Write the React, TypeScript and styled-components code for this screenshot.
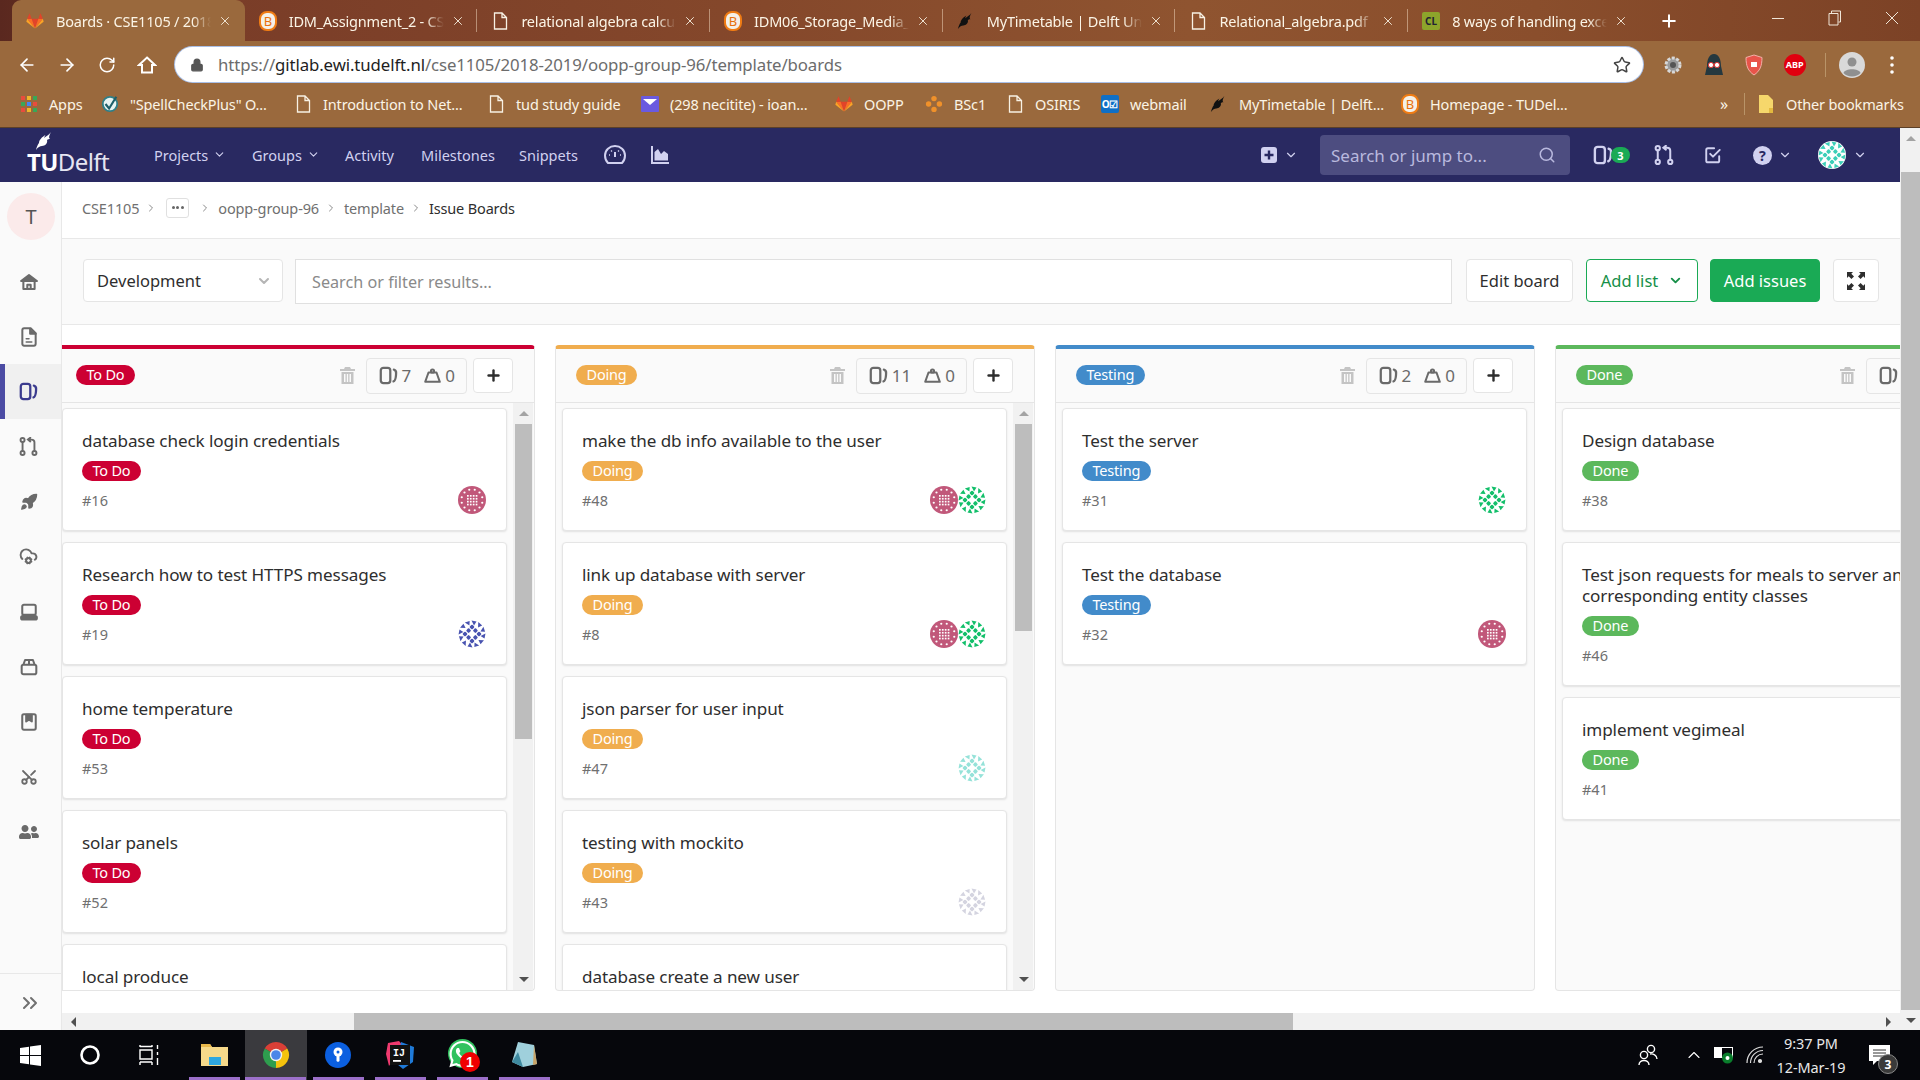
import React from 'react';
import styled, { createGlobalStyle } from 'styled-components';
import { Rocket, CloudCog, Scissors, Star, Lock, ArrowLeft, ArrowRight, RotateCw, ChevronDown, ChevronRight, Search, Plus, X, ChevronsRight, ChevronUp } from 'lucide-react';
import { FaUserFriends, FaWhatsapp } from 'react-icons/fa';

const UI = `"Noto Sans", "Open Sans", sans-serif`;

const Global = createGlobalStyle`
  html, body { margin: 0; padding: 0; overflow: hidden; background: #fff; }
  * { box-sizing: border-box; }
  #root { width: 1920px; height: 1080px; font-family: ${UI}; }
`;

const Screen = styled.div`width: 1920px; height: 1080px; display: flex; flex-direction: column; overflow: hidden;`;

/* ---------- browser chrome ---------- */
const TabStrip = styled.div`
  height: 41px; flex: none; display: flex; align-items: stretch; padding-left: 12px;
  background: linear-gradient(90deg, #5a281f 0, #7a3d28 12%, #85482b 40%, #8f5430 62%, #8a4e2c 80%, #7c4226 100%);
`;
const Tab = styled.div<{ $active?: boolean; $sep?: boolean }>`
  width: 232.7px; flex: none; display: flex; align-items: center; position: relative; padding-left: 14px;
  color: #fbf4e6; font-size: 14.5px;
  background: ${p => (p.$active ? '#9a693d' : 'transparent')};
  border-radius: 9px 9px 0 0;
  &::after {
    content: ''; position: absolute; right: 0; top: 9px; bottom: 9px; width: 1px;
    background: ${p => (p.$sep ? 'rgba(255,235,210,.45)' : 'transparent')};
  }
`;
const TabIcon = styled.span`width: 18px; height: 18px; flex: none; display: flex; align-items: center; justify-content: center;`;
const TabTitle = styled.span`
  margin: 0 6px 0 12px; width: 155px; flex: none; white-space: nowrap; overflow: hidden; letter-spacing: -0.2px;
  mask-image: linear-gradient(90deg, #000 88%, transparent);
`;
const TabClose = styled.span`width: 16px; display: flex; justify-content: center; color: #f4ecdc;`;
const NewTab = styled.div`margin-left: 16px; width: 24px; display: flex; align-items: center; justify-content: center; color: #fff;`;
const WindowControls = styled.div`margin-left: auto; display: flex;`;
const WindowButton = styled.div`width: 57px; display: flex; align-items: center; justify-content: center; color: #f0e6d8; padding-bottom: 6px;`;

const Toolbar = styled.div`height: 46px; flex: none; display: flex; align-items: flex-start; padding: 6px 0 0 7px; background: #9a693d;`;
const ToolButton = styled.div`width: 40px; height: 35px; flex: none; display: flex; align-items: center; justify-content: center; color: #fff;`;
const Address = styled.div`
  margin-left: 8px; width: 1468px; height: 35px; flex: none; display: flex; align-items: center; padding: 0 12px 0 15px;
  background: #fff; border-radius: 18px; box-shadow: 0 0 0 1px #a9bfe6; font-size: 16.8px; color: #6c6c6c; letter-spacing: -0.1px;
`;
const Url = styled.span`margin-left: 14px; flex: 1; white-space: nowrap;`;
const Host = styled.span`color: #1e1e1e;`;
const Extensions = styled.div`margin-left: 10px; display: flex; align-items: center; height: 35px;`;
const ExtSlot = styled.div`width: 40.5px; display: flex; justify-content: center;`;
const ExtDivider = styled.div`margin-left: 10px; width: 1px; height: 24px; background: #b99468;`;
const ProfileSlot = styled.div`width: 52px; display: flex; justify-content: center;`;
const DotsSlot = styled.div`width: 28px; display: flex; justify-content: center; color: #fff;`;

const BookmarkBar = styled.div`
  height: 41px; flex: none; display: flex; align-items: center; padding: 0 0 7px 20px; background: #9a693d;
  border-bottom: 1px solid #5c4028; color: #fbf4e6; font-size: 14.5px; letter-spacing: -0.15px;
`;
const Bookmark = styled.div<{ $w: number }>`width: ${p => p.$w}px; flex: none; display: flex; align-items: center; gap: 11px; white-space: nowrap;`;
const BookmarkIcon = styled.span`width: 18px; height: 18px; flex: none; display: flex; align-items: center; justify-content: center;`;
const BookmarkEnd = styled.div`margin-left: auto; display: flex; align-items: center; padding-right: 30px;`;
const More = styled.span`font-size: 16px; width: 20px; text-align: center;`;
const BarDivider = styled.span`margin: 0 12px 0 10px; width: 1px; height: 22px; background: #b99468;`;

/* ---------- page ---------- */
const Viewport = styled.div`flex: 1; min-height: 0; display: flex;`;
const Page = styled.div`width: 1900px; flex: none; display: flex; flex-direction: column; min-width: 0;`;

const Nav = styled.div`height: 54px; flex: none; display: flex; align-items: center; background: #292961; padding-left: 27px; padding-right: 33px; color: #d1d1f0; font-size: 14.5px;`;
const Logo = styled.div`width: 127px; flex: none; display: flex; flex-direction: column; color: #fff; line-height: 1; position: relative; height: 48px; padding-bottom: 5px; justify-content: flex-end;`;
const LogoFlame = styled.span`position: absolute; left: 8px; top: 0;`;
const LogoText = styled.span`font-size: 24px; letter-spacing: -0.6px; color: #e6e6f2;`;
const LogoStrong = styled.b`font-weight: 700; color: #fff;`;
const NavItem = styled.div<{ $w: number }>`width: ${p => p.$w}px; flex: none; display: flex; align-items: center; gap: 5px; white-space: nowrap; padding-bottom: 1px;`;
const NavRight = styled.div`margin-left: auto; display: flex; align-items: center;`;
const NavIconSlot = styled.span<{ $ml?: number }>`margin-left: ${p => p.$ml ?? 0}px; display: flex; align-items: center; color: #d1d1f0;`;
const NavSearch = styled.div`
  margin-left: 22px; width: 250px; height: 40px; display: flex; align-items: center; justify-content: space-between;
  padding: 0 14px 0 11px; background: #4d4d80; border-radius: 4px; color: #b9b9de; font-size: 17px;
`;
const NavBadge = styled.span`
  width: 19px; height: 16px; border-radius: 8px; background: #1aaa55; color: #fff; font-size: 11px; font-weight: 700;
  display: flex; align-items: center; justify-content: center; margin-left: -2px;
`;

const Body = styled.div`flex: 1; min-height: 0; display: flex;`;
const Sidebar = styled.div`width: 62px; flex: none; display: flex; flex-direction: column; background: #fafafa; border-right: 1px solid #e8e8e8;`;
const ContextAvatar = styled.div`
  margin: 11px 0 14px 7px; width: 48px; height: 47px; border-radius: 50%; background: #fbeaea; color: #555;
  display: flex; align-items: center; justify-content: center; font-size: 20px;
`;
const SideItem = styled.div<{ $active?: boolean }>`
  height: 55px; flex: none; display: flex; align-items: center; justify-content: center; padding-right: 4px;
  color: ${p => (p.$active ? '#3b3b8e' : '#6a6a6a')};
  background: ${p => (p.$active ? '#f0f0f0' : 'transparent')};
  box-shadow: ${p => (p.$active ? 'inset 5px 0 0 #4b4ba3' : 'none')};
`;
const SideCollapse = styled.div`margin-top: auto; height: 57px; border-top: 1px solid #e8e8e8; display: flex; align-items: center; justify-content: center; color: #707070; padding: 2px 2px 0 0;`;

const Main = styled.div`flex: 1; min-width: 0; display: flex; flex-direction: column;`;
const Crumbs = styled.div`height: 57px; flex: none; display: flex; align-items: center; padding-left: 20px; border-bottom: 1px solid #e8e8e8; background: #fff; color: #707070; font-size: 14.5px; padding-bottom: 5px; letter-spacing: -0.15px;`;
const CrumbArrow = styled.span`display: flex; margin: 0 7px 0 6px; color: #8a8a8a;`;
const CrumbDots = styled.span`width: 23px; height: 20px; border: 1px solid #e0e0e0; border-radius: 3px; display: flex; align-items: center; justify-content: center; gap: 1.5px; margin: 0 4px 0 2px;`;
const CrumbDot = styled.i`width: 3px; height: 3px; border-radius: 50%; background: #666;`;
const CrumbCurrent = styled.span`color: #2e2e2e;`;

const FilterBar = styled.div`
  height: 86px; flex: none; display: flex; align-items: flex-start; padding: 20px 21px 0; background: #fafafa; border-bottom: 1px solid #e8e8e8;
`;
const BoardSelect = styled.div`
  width: 200px; height: 43px; flex: none; display: flex; align-items: center; justify-content: space-between; padding: 0 10px 0 13px;
  background: #fff; border: 1px solid #e5e5e5; border-radius: 4px; color: #2e2e2e; font-size: 16.5px;
`;
const FilterInput = styled.div`
  margin-left: 12px; width: 1157px; height: 45px; flex: none; display: flex; align-items: center; padding-left: 16px;
  background: #fff; border: 1px solid #e0e0e0; color: #8a8a8a; font-size: 16.2px;
`;
const ActionButton = styled.div<{ $w: number; $ml: number; $kind?: 'outline' | 'solid' }>`
  width: ${p => p.$w}px; margin-left: ${p => p.$ml}px; height: 43px; flex: none; display: flex; align-items: center; justify-content: center; gap: 10px;
  border-radius: 4px; font-size: 16.5px;
  border: 1px solid ${p => (p.$kind === 'outline' ? '#1aaa55' : p.$kind === 'solid' ? '#1aaa55' : '#e5e5e5')};
  background: ${p => (p.$kind === 'solid' ? '#1aaa55' : '#fff')};
  color: ${p => (p.$kind === 'solid' ? '#fff' : p.$kind === 'outline' ? '#168f48' : '#2e2e2e')};
`;

const BoardArea = styled.div`flex: 1; min-height: 0; overflow: hidden; padding-top: 20px; background: #fff;`;
const Lists = styled.div`height: 646px; display: flex; gap: 20px; margin-left: -7px; width: 2000px;`;
const Column = styled.div<{ $color: string }>`
  width: 480px; flex: none; display: flex; flex-direction: column; background: #fafafa; overflow: hidden;
  border: 1px solid #e5e5e5; border-top: 4px solid ${p => p.$color}; border-radius: 4px;
`;
const ColumnHeader = styled.div`height: 54px; flex: none; display: flex; align-items: center; padding: 0 21px 0 20px; border-bottom: 1px solid #e5e5e5;`;
const HeaderPill = styled.span<{ $color: string }>`
  height: 20px; padding: 0 10.5px; border-radius: 10px; background: ${p => p.$color}; color: #fff; font-size: 14.5px; line-height: 19px; letter-spacing: -0.2px;
`;
const ColumnPill = styled(HeaderPill)`margin-top: -2px;`;
const Trash = styled.span`margin-left: auto; margin-right: 11px; display: flex; color: #c4c4c4;`;
const CountBox = styled.div`
  height: 36px; padding: 0 11px 0 12px; display: flex; align-items: center; gap: 4px; border: 1px solid #e5e5e5; border-radius: 4px; color: #6a6a6a; font-size: 17px;
`;
const CountGap = styled.span`width: 5px;`;
const AddCard = styled.div`margin-left: 6px; width: 40px; height: 35px; flex: none; display: flex; align-items: center; justify-content: center; background: #fff; border: 1px solid #e5e5e5; border-radius: 4px; color: #2e2e2e;`;
const ColumnBody = styled.div`flex: 1; min-height: 0; display: flex;`;
const Cards = styled.div`flex: 1; min-width: 0; display: flex; flex-direction: column; gap: 11px; padding: 5px 0 0 6px; overflow: hidden;`;
const Card = styled.div`
  width: 445px; flex: none; padding: 21px 20px 16px 19px; background: #fff; border: 1px solid #e5e5e5; border-radius: 4px;
  box-shadow: 0 1px 2px rgba(0,0,0,.1);
`;
const WideCard = styled(Card)`width: 465px;`;
const CardTitle = styled.div`font-size: 17.1px; line-height: 21px; color: #2e2e2e; letter-spacing: -0.1px;`;
const CardPill = styled(HeaderPill)`display: inline-block; margin-top: 10px; vertical-align: top;`;
const CardFoot = styled.div`height: 28px; margin-top: 5px; display: flex; align-items: center; justify-content: space-between;`;
const CardNumber = styled.span`font-size: 14.5px; color: #707070;`;
const Avatars = styled.span`display: flex; height: 28px;`;

const ListScroll = styled.div`width: 20px; flex: none; margin-right: 1px; padding-right: 1px; display: flex; flex-direction: column; align-items: flex-end; background: #f1f1f1;`;
const ArrowBox = styled.div`height: 21px; width: 17px; flex: none; display: flex; align-items: center; justify-content: center;`;
const ListThumb = styled.div<{ $h: number }>`width: 17px; height: ${p => p.$h}px; flex: none; background: #bdbdbd;`;
const ArrowEnd = styled(ArrowBox)`margin-top: auto;`;
const Triangle = styled.i<{ $dir: 'up' | 'down' | 'left' | 'right'; $color?: string }>`
  width: 0; height: 0; display: block;
  ${p => {
    const c = p.$color ?? '#505050';
    if (p.$dir === 'up') return `border-left:5px solid transparent;border-right:5px solid transparent;border-bottom:5px solid ${c === '#505050' ? '#a3a3a3' : c};`;
    if (p.$dir === 'down') return `border-left:5px solid transparent;border-right:5px solid transparent;border-top:5px solid ${c};`;
    if (p.$dir === 'left') return `border-top:5px solid transparent;border-bottom:5px solid transparent;border-right:5px solid ${c};`;
    return `border-top:5px solid transparent;border-bottom:5px solid transparent;border-left:5px solid ${c};`;
  }}
`;

const HScroll = styled.div`height: 17px; flex: none; display: flex; align-items: center; background: #f1f1f1; margin-top: 0;`;
const HArrow = styled.div<{ $w: number }>`width: ${p => p.$w}px; height: 17px; flex: none; display: flex; align-items: center; justify-content: center;`;
const HThumb = styled.div`margin-left: 270px; width: 939px; height: 17px; background: #bdbdbd;`;
const HEnd = styled(HArrow)`margin-left: auto;`;

const PageScroll = styled.div`width: 20px; flex: none; display: flex; flex-direction: column; align-items: flex-end; background: #f1f1f1;`;
const PageArrow = styled.div`width: 19px; height: 44px; flex: none; display: flex; align-items: flex-start; padding-top: 8px; justify-content: center;`;
const PageThumb = styled.div`width: 19px; height: 838px; flex: none; background: #bdbdbd;`;
const PageArrowEnd = styled.div`width: 19px; flex: 1; display: flex; align-items: center; justify-content: center;`;

/* ---------- taskbar ---------- */
const Taskbar = styled.div`height: 50px; flex: none; display: flex; align-items: center; background: #06070c; color: #fff;`;
const StartSlot = styled.div<{ $w: number }>`width: ${p => p.$w}px; height: 50px; flex: none; display: flex; align-items: center; justify-content: center;`;
const AppsGap = styled.span`width: 3px; flex: none;`;
const AppSlot = styled.div<{ $active?: boolean }>`
  width: 62px; height: 50px; flex: none; display: flex; align-items: center; justify-content: center; position: relative;
  background: ${p => (p.$active ? '#3a3a3e' : 'transparent')};
  &::after { content: ''; position: absolute; bottom: 0; height: 3px; left: ${p => (p.$active ? 0 : 6)}px; right: ${p => (p.$active ? 1 : 5)}px; background: #9b6fc9; }
`;
const WhatsappMark = styled.span`width: 29px; height: 29px; border-radius: 50%; background: #31c25f; color: #fff; display: flex; align-items: center; justify-content: center; margin-top: -3px;`;
const AppBadge = styled.span`
  position: absolute; left: 29px; top: 22px; width: 20px; height: 20px; border-radius: 50%; background: #f00000; color: #fff; font: 700 14px/20px "Liberation Sans", sans-serif; text-align: center;
`;
const Tray = styled.div`margin-left: auto; display: flex; align-items: center; height: 50px;`;
const TraySlot = styled.div<{ $w: number; $ml?: number }>`width: ${p => p.$w}px; margin-left: ${p => p.$ml ?? 0}px; display: flex; justify-content: center; align-items: center;`;
const Clock = styled.div`width: 86px; text-align: center; font-size: 14.5px; line-height: 24px; color: #e8e8e8; letter-spacing: -0.1px;`;
const Notify = styled.div`width: 50px; margin-right: 16px; height: 50px; display: flex; align-items: center; justify-content: center; position: relative;`;
const NotifyBadge = styled.span`
  position: absolute; left: 24px; top: 24px; width: 20px; height: 20px; border-radius: 50%; background: #3a3a3a; border: 1px solid #888; color: #fff;
  font-size: 12px; font-weight: 700; display: flex; align-items: center; justify-content: center;
`;
const LetterIcon = styled.span<{ $bg: string; $size?: number; $round?: boolean; $color?: string; $box?: number }>`
  width: ${p => p.$box ?? 18}px; height: ${p => p.$box ?? 18}px; display: flex; align-items: center; justify-content: center; font-size: ${p => p.$size ?? 11}px; font-weight: 700;
  background: ${p => p.$bg}; color: ${p => p.$color ?? '#fff'}; border-radius: ${p => (p.$round ? '50%' : '2px')}; line-height: 1;
`;
const ScissorsMark = styled(Scissors)`transform: rotate(-90deg);`;

/* ---------- drawings ---------- */
const FoxIcon = ({ s = 18 }: { s?: number }) => (
  <svg width={s} height={s} viewBox="0 0 24 24">
    <path d="M12 22 L16.5 9 H7.5 Z" fill="#e24329" />
    <path d="M12 22 L7.5 9 H1.5 Z" fill="#fc6d26" />
    <path d="M12 22 L16.5 9 H22.5 Z" fill="#fc6d26" />
    <path d="M1.5 9 L0.5 13 L12 22 Z" fill="#fca326" />
    <path d="M22.5 9 L23.5 13 L12 22 Z" fill="#fca326" />
    <path d="M1.5 9 H7.5 L4.8 1.5 Z" fill="#e24329" />
    <path d="M22.5 9 H16.5 L19.2 1.5 Z" fill="#e24329" />
  </svg>
);
const BIcon = () => (
  <svg width="20" height="22" viewBox="0 0 18 20">
    <rect x="1" y="1" width="16" height="18" rx="7" fill="#f4f0e8" stroke="#f07c14" strokeWidth="2" />
    <text x="9" y="14.5" textAnchor="middle" fontSize="13" fontFamily="Noto Sans" fill="#e8700e">B</text>
  </svg>
);
const PageIcon = ({ c = '#f8f1e4' }: { c?: string }) => (
  <svg width="15" height="18" viewBox="0 0 15 18" fill="none" stroke={c} strokeWidth="1.3">
    <path d="M1.5 1 H9 L13.5 5.5 V17 H1.5 Z M9 1 V5.5 H13.5" />
  </svg>
);
const FlameIcon = ({ c = '#111', s = 24 }: { c?: string; s?: number }) => (
  <svg width={s} height={s} viewBox="0 0 20 20"><path d="M16 1 C14 4 11 5 9 7 C9.5 5.5 10 4.5 10.5 4 C7 6 4 9 4 12 C3 13 2 15 1 19 C3 16 5 15 7 15 C10 15 13 12 12 9 C13 8 14 8 15 8 C13 6.5 15 3 16 1 Z" fill={c} /></svg>
);
const BoardGlyph = ({ s = 20 }: { s?: number }) => (
  <svg width={s} height={s} viewBox="0 0 16 16" fill="none" stroke="currentColor" strokeWidth="1.9" strokeLinecap="round">
    <rect x="1.5" y="1.5" width="8" height="13" rx="2.2" />
    <path d="M12.5 3 C14.6 3.4 14.6 5 14.3 8 C14 11 13.6 12.6 12.2 13" />
  </svg>
);
const MergeGlyph = ({ s = 20 }: { s?: number }) => (
  <svg width={s} height={s} viewBox="0 0 16 16" fill="none" stroke="currentColor" strokeWidth="1.6" strokeLinecap="round">
    <circle cx="3" cy="13.5" r="1.7" /><circle cx="13" cy="13.5" r="1.7" /><circle cx="3" cy="2.5" r="1.7" />
    <path d="M3 4.3 V11.7 M13 11.7 V4.5 C13 3 12 2.2 10.5 2.2 H7.5 M9.5 0.6 L7.5 2.2 L9.5 3.8" />
  </svg>
);
const TodoGlyph = () => (
  <svg width="18" height="18" viewBox="0 0 16 16" fill="none" stroke="currentColor" strokeWidth="1.7" strokeLinecap="round" strokeLinejoin="round">
    <path d="M13.5 9 V13 C13.5 14 13 14.5 12 14.5 H3.5 C2.5 14.5 2 14 2 13 V3.5 C2 2.5 2.5 2 3.5 2 H9" /><path d="M5.5 7 L8 9.5 L14 3.5" />
  </svg>
);
const HelpGlyph = () => (
  <svg width="19" height="19" viewBox="0 0 16 16"><circle cx="8" cy="8" r="8" fill="currentColor" /><text x="8" y="12.5" textAnchor="middle" fontSize="12" fontWeight="700" fontFamily="Noto Sans" fill="#292961">?</text></svg>
);
const HomeGlyph = () => (
  <svg width="18" height="18" viewBox="0 0 16 16" fill="none" stroke="currentColor" strokeWidth="1.8" strokeLinejoin="round">
    <path d="M1 7.2 L8 1.8 L15 7.2 H1 Z" fill="currentColor" /><path d="M3 7 V14.2 H13 V7 M6.5 14 V10.5 H9.5 V14" />
  </svg>
);
const DocGlyph = () => (
  <svg width="18" height="20" viewBox="0 0 16 18" fill="none" stroke="currentColor" strokeWidth="1.8" strokeLinejoin="round" strokeLinecap="round">
    <path d="M2 3 C2 2 2.6 1.2 3.6 1.2 H9.5 L14 5.5 V15 C14 16 13.4 16.8 12.4 16.8 H3.6 C2.6 16.8 2 16 2 15 Z" /><path d="M9 1.5 V6 H14" fill="currentColor" /><path d="M5.5 10.5 H8 M5.5 13.5 H10.5" strokeWidth="1.4" />
  </svg>
);
const LaptopGlyph = () => (
  <svg width="18" height="18" viewBox="0 0 16 16" fill="none" stroke="currentColor" strokeWidth="1.8" strokeLinejoin="round">
    <rect x="2" y="1.5" width="12" height="9" rx="1.5" /><rect x="1" y="11.5" width="14" height="3.2" rx="1.4" fill="currentColor" />
  </svg>
);
const PackageGlyph = () => (
  <svg width="18" height="18" viewBox="0 0 16 16" fill="none" stroke="currentColor" strokeWidth="1.8" strokeLinejoin="round">
    <rect x="1.5" y="6" width="13" height="8.5" rx="1.6" /><path d="M3 6 L4.5 1.8 H11.5 L13 6 M8 2 V6" />
  </svg>
);
const BookGlyph = () => (
  <svg width="18" height="18" viewBox="0 0 16 16" fill="none" stroke="currentColor" strokeWidth="1.8" strokeLinejoin="round">
    <rect x="2" y="1.2" width="12" height="13.6" rx="1.4" /><path d="M5.5 1.5 H10.5 V7.5 L8 6 L5.5 7.5 Z" fill="currentColor" />
  </svg>
);

const Identicon = ({ color, kind, s = 28, faded }: { color: string; kind: 'dots' | 'flake'; s?: number; faded?: boolean }) => {
  const cells: React.ReactNode[] = [];
  if (kind === 'dots') {
    for (let x = 0; x < 4; x++) for (let y = 0; y < 4; y++)
      cells.push(<rect key={`g${x}${y}`} x={9 + x * 2.9} y={9 + y * 2.9} width="1.7" height="1.7" fill="#fff" />);
    for (let i = 0; i < 12; i++) {
      const a = (i / 12) * Math.PI * 2 + Math.PI / 12;
      cells.push(<circle key={`r${i}`} cx={14 + 10.6 * Math.cos(a)} cy={14 + 10.6 * Math.sin(a)} r="1.1" fill="#fff" />);
    }
    return <svg width={s} height={s} viewBox="0 0 28 28"><circle cx="14" cy="14" r="14" fill={color} />{cells}</svg>;
  }
  [[-3.4, -3.4], [3.4, -3.4], [-3.4, 3.4], [3.4, 3.4], [0, -7], [0, 7], [-7, 0], [7, 0]].forEach(([dx, dy], i) =>
    cells.push(<rect key={`c${i}`} x={14 + dx - 1.9} y={14 + dy - 1.9} width="3.8" height="3.8" rx="1" transform={`rotate(45 ${14 + dx} ${14 + dy})`} fill={color} />),
  );
  for (let i = 0; i < 12; i++) {
    const a = (i / 12) * 360;
    cells.push(<path key={`p${i}`} d="M13.5 0.5 L18.5 1.5 L16 5.4 Z" transform={`rotate(${a} 14 14)`} fill={color} />);
  }
  return <svg width={s} height={s} viewBox="0 0 28 28" opacity={faded ? 0.6 : 1}><circle cx="14" cy="14" r="14" fill="#fff" />{cells}</svg>;
};

const pink = { color: '#c1587a', kind: 'dots' as const };
const green = { color: '#12bf6a', kind: 'flake' as const };
const blue = { color: '#4853b0', kind: 'flake' as const };
const teal = { color: '#4fd0c0', kind: 'flake' as const, faded: true };
const grey = { color: '#b8b8cc', kind: 'flake' as const, faded: true };

/* ---------- data ---------- */
const tabs = [
  { t: 'Boards · CSE1105 / 2018-2019 / oopp', i: <FoxIcon />, active: true },
  { t: 'IDM_Assignment_2 - CSE1505', i: <BIcon />, sep: true },
  { t: 'relational algebra calculator', i: <PageIcon />, sep: true },
  { t: 'IDM06_Storage_Media_and_File', i: <BIcon />, sep: true },
  { t: 'MyTimetable | Delft University', i: <FlameIcon />, sep: true },
  { t: 'Relational_algebra.pdf', i: <PageIcon />, sep: true },
  { t: '8 ways of handling exceptions', i: <LetterIcon $bg="#8da52b" $color="#223" $size={10}>CL</LetterIcon> },
];

const bookmarks: { t: string; w: number; i: React.ReactNode }[] = [
  { t: 'Apps', w: 81, i: <svg width="16" height="16" viewBox="0 0 16 16">{[0, 1, 2].flatMap(x => [0, 1, 2].map(y => <rect key={`${x}${y}`} x={x * 6} y={y * 6} width="4" height="4" fill={['#e84c3d', '#f0b429', '#3aa757', '#4285f4'][(x + y * 2) % 4]} />))}</svg> },
  { t: '"SpellCheckPlus" O...', w: 193, i: <svg width="20" height="20" viewBox="0 0 20 20"><circle cx="10" cy="10" r="8" fill="#e8f4f2" stroke="#2f7f88" strokeWidth="2" /><path d="M5 10 L9 15 L17 2" fill="none" stroke="#1d5f6a" strokeWidth="2.4" /></svg> },
  { t: 'Introduction to Net...', w: 193, i: <PageIcon /> },
  { t: 'tud study guide', w: 154, i: <PageIcon /> },
  { t: '(298 necitite) - ioan...', w: 194, i: <svg width="18" height="16" viewBox="0 0 18 16"><rect width="18" height="16" rx="1" fill="#6a5ae0" /><path d="M2 3 H16 L9 9 Z" fill="#fff" /></svg> },
  { t: 'OOPP', w: 90, i: <FoxIcon /> },
  { t: 'BSc1', w: 81, i: <svg width="20" height="20" viewBox="0 0 20 20" fill="#f0912a"><circle cx="10" cy="4" r="3" /><circle cx="4" cy="10" r="3" /><circle cx="16" cy="10" r="3" /><circle cx="10" cy="16" r="3" /></svg> },
  { t: 'OSIRIS', w: 95, i: <PageIcon /> },
  { t: 'webmail', w: 109, i: <LetterIcon $bg="#0f6fc6" $size={10}>O☑</LetterIcon> },
  { t: 'MyTimetable | Delft...', w: 191, i: <FlameIcon /> },
  { t: 'Homepage - TUDel...', w: 200, i: <BIcon /> },
];

type CardData = { title: React.ReactNode; num: string; who?: any[] };
const lists: { name: string; color: string; count: string; thumb?: number; cards: CardData[] }[] = [
  { name: 'To Do', color: '#cc0033', count: '7', thumb: 315, cards: [
    { title: 'database check login credentials', num: '#16', who: [pink] },
    { title: 'Research how to test HTTPS messages', num: '#19', who: [blue] },
    { title: 'home temperature', num: '#53' },
    { title: 'solar panels', num: '#52' },
    { title: 'local produce', num: '#50' },
  ] },
  { name: 'Doing', color: '#f0ad4e', count: '11', thumb: 207, cards: [
    { title: 'make the db info available to the user', num: '#48', who: [pink, green] },
    { title: 'link up database with server', num: '#8', who: [pink, green] },
    { title: 'json parser for user input', num: '#47', who: [teal] },
    { title: 'testing with mockito', num: '#43', who: [grey] },
    { title: 'database create a new user', num: '#40' },
  ] },
  { name: 'Testing', color: '#428bca', count: '2', cards: [
    { title: 'Test the server', num: '#31', who: [green] },
    { title: 'Test the database', num: '#32', who: [pink] },
  ] },
  { name: 'Done', color: '#5cb85c', count: '9', cards: [
    { title: 'Design database', num: '#38' },
    { title: 'Test json requests for meals to server and corresponding entity classes', num: '#46' },
    { title: 'implement vegimeal', num: '#41' },
  ] },
];

const TrashGlyph = () => (
  <svg width="15" height="17" viewBox="0 0 15 17" fill="currentColor"><path d="M5 0 H10 L11 2 H15 V4 H0 V2 H4 Z" /><path d="M1.5 5 H13.5 V17 H1.5 Z M4 7 V15 H5.5 V7 Z M6.8 7 V15 H8.2 V7 Z M9.5 7 V15 H11 V7 Z" fillRule="evenodd" /></svg>
);
const WeightGlyph = () => (
  <svg width="17" height="15" viewBox="0 0 17 15" fill="none" stroke="currentColor" strokeWidth="2" strokeLinejoin="round"><path d="M1.2 13.8 L4.5 4.5 H12.5 L15.8 13.8 Z" /><circle cx="8.5" cy="3" r="1.6" /></svg>
);

const ListCard = ({ c, wide, color, name }: { c: CardData; wide: boolean; color: string; name: string }) => {
  const Wrap = wide ? WideCard : Card;
  return (
    <Wrap>
      <CardTitle>{c.title}</CardTitle>
      <CardPill $color={color}>{name}</CardPill>
      <CardFoot>
        <CardNumber>{c.num}</CardNumber>
        <Avatars>{(c.who ?? []).map((w, i) => <Identicon key={i} {...w} />)}</Avatars>
      </CardFoot>
    </Wrap>
  );
};

export default function App() {
  return (
    <Screen>
      <Global />
      <TabStrip>
        {tabs.map(t => (
          <Tab key={t.t} $active={t.active} $sep={t.sep}>
            <TabIcon>{t.i}</TabIcon>
            <TabTitle>{t.t}</TabTitle>
            <TabClose><X size={14} strokeWidth={1.6} /></TabClose>
          </Tab>
        ))}
        <NewTab><Plus size={20} strokeWidth={2.4} /></NewTab>
        <WindowControls>
          <WindowButton><svg width="12" height="12"><path d="M0 6.5 H12" stroke="currentColor" /></svg></WindowButton>
          <WindowButton><svg width="14" height="16" fill="none" stroke="currentColor"><path d="M3.5 3 V1 H12.5 V12 H10.5 M1 3.5 H10 V15 H1 Z" /></svg></WindowButton>
          <WindowButton><svg width="14" height="14" stroke="currentColor"><path d="M1 1 L13 13 M13 1 L1 13" /></svg></WindowButton>
        </WindowControls>
      </TabStrip>

      <Toolbar>
        <ToolButton><ArrowLeft size={20} /></ToolButton>
        <ToolButton><ArrowRight size={20} /></ToolButton>
        <ToolButton><RotateCw size={18} /></ToolButton>
        <ToolButton><svg width="20" height="20" viewBox="0 0 20 20" fill="none" stroke="#fff" strokeWidth="2"><path d="M10 2.5 L18 10 H15 V17.5 H5 V10 H2 Z" /></svg></ToolButton>
        <Address>
          <Lock size={14} fill="#555" color="#555" />
          <Url>https://<Host>gitlab.ewi.tudelft.nl</Host>/cse1105/2018-2019/oopp-group-96/template/boards</Url>
          <Star size={18} color="#444" />
        </Address>
        <Extensions>
          <ExtSlot><svg width="20" height="22" viewBox="0 0 20 20"><circle cx="10" cy="10" r="7" fill="#9a9a9a" stroke="#d8d8d8" strokeWidth="3" strokeDasharray="3 1.5" /><circle cx="10" cy="10" r="3" fill="#555" /></svg></ExtSlot>
          <ExtSlot><svg width="20" height="24" viewBox="0 0 20 24"><path d="M10 1 C5 1 3 7 3 13 L1 22 H19 L17 13 C17 7 15 1 10 1 Z" fill="#25383f" /><circle cx="7" cy="12" r="2.6" fill="#fff" stroke="#d33" /><circle cx="13" cy="12" r="2.6" fill="#fff" stroke="#d33" /></svg></ExtSlot>
          <ExtSlot><svg width="18" height="22" viewBox="0 0 18 22"><path d="M9 1 L17 3.5 C17 12 15 17 9 21 C3 17 1 12 1 3.5 Z" fill="#e8544a" stroke="#f3b0a8" /><rect x="6" y="8" width="6" height="5" fill="#fff" /></svg></ExtSlot>
          <ExtSlot><LetterIcon $bg="#e0000f" $size={9} $round $box={22}>ABP</LetterIcon></ExtSlot>
          <ExtDivider />
          <ProfileSlot><svg width="26" height="26" viewBox="0 0 26 26"><circle cx="13" cy="13" r="13" fill="#d9d9d9" /><circle cx="13" cy="10" r="4.5" fill="#8f8f8f" /><path d="M4.5 21 C6 16 20 16 21.5 21 C18 25.5 8 25.5 4.5 21 Z" fill="#8f8f8f" /></svg></ProfileSlot>
          <DotsSlot><svg width="4" height="18" fill="#fff"><circle cx="2" cy="2" r="1.8" /><circle cx="2" cy="9" r="1.8" /><circle cx="2" cy="16" r="1.8" /></svg></DotsSlot>
        </Extensions>
      </Toolbar>

      <BookmarkBar>
        {bookmarks.map(b => (
          <Bookmark key={b.t} $w={b.w}><BookmarkIcon>{b.i}</BookmarkIcon>{b.t}</Bookmark>
        ))}
        <BookmarkEnd>
          <More>»</More>
          <BarDivider />
          <Bookmark $w={133}>
            <BookmarkIcon><svg width="16" height="18" viewBox="0 0 16 18"><path d="M1 0 H10 L15 5 V18 H1 Z" fill="#f6d76b" /><path d="M11 13 H15 V18 H11 Z" fill="#e3b93f" /></svg></BookmarkIcon>
            Other bookmarks
          </Bookmark>
        </BookmarkEnd>
      </BookmarkBar>

      <Viewport>
        <Page>
          <Nav>
            <Logo>
              <LogoFlame><FlameIcon c="#fff" s={20} /></LogoFlame>
              <LogoText><LogoStrong>TU</LogoStrong>Delft</LogoText>
            </Logo>
            <NavItem $w={98}>Projects <ChevronDown size={13} /></NavItem>
            <NavItem $w={93}>Groups <ChevronDown size={13} /></NavItem>
            <NavItem $w={76}>Activity</NavItem>
            <NavItem $w={98}>Milestones</NavItem>
            <NavItem $w={85}>Snippets</NavItem>
            <NavItem $w={47}>
              <svg width="22" height="22" viewBox="0 0 22 22" fill="none" stroke="currentColor" strokeWidth="2"><path d="M4 19 H18 C20 17 21 14 21 11.5 C21 6 16.5 2 11 2 C5.5 2 1 6 1 11.5 C1 14 2 17 4 19 Z" /><path d="M11 8 V13" /><path d="M5 11 H6 M16 11 H17 M7 6.5 L8 7.5 M15 6.5 L14 7.5" strokeWidth="1.3" /></svg>
            </NavItem>
            <NavItem $w={30}>
              <svg width="18" height="18" viewBox="0 0 18 18" fill="currentColor"><path d="M0 0 H2 V16 H18 V18 H0 Z" /><path d="M3.5 14.5 V6 L7 3 L10 8 L13 5 L17 8 V14.5 Z" /></svg>
            </NavItem>
            <NavRight>
              <NavIconSlot>
                <svg width="16" height="16" viewBox="0 0 16 16"><rect width="16" height="16" rx="3" fill="currentColor" /><path d="M8 3.5 V12.5 M3.5 8 H12.5" stroke="#292961" strokeWidth="2.4" /></svg>
              </NavIconSlot>
              <NavIconSlot $ml={7}><ChevronDown size={14} /></NavIconSlot>
              <NavSearch>Search or jump to... <Search size={18} /></NavSearch>
              <NavIconSlot $ml={23}><BoardGlyph /></NavIconSlot>
              <NavBadge>3</NavBadge>
              <NavIconSlot $ml={24}><MergeGlyph /></NavIconSlot>
              <NavIconSlot $ml={30}><TodoGlyph /></NavIconSlot>
              <NavIconSlot $ml={31}><HelpGlyph /></NavIconSlot>
              <NavIconSlot $ml={6}><ChevronDown size={14} /></NavIconSlot>
              <NavIconSlot $ml={26}><Identicon color="#3ccfb8" kind="flake" /></NavIconSlot>
              <NavIconSlot $ml={7}><ChevronDown size={14} /></NavIconSlot>
            </NavRight>
          </Nav>

          <Body>
            <Sidebar>
              <ContextAvatar>T</ContextAvatar>
              <SideItem><HomeGlyph /></SideItem>
              <SideItem><DocGlyph /></SideItem>
              <SideItem $active><BoardGlyph s={19} /></SideItem>
              <SideItem><MergeGlyph s={19} /></SideItem>
              <SideItem><Rocket size={18} fill="currentColor" /></SideItem>
              <SideItem><CloudCog size={19} strokeWidth={2.4} /></SideItem>
              <SideItem><LaptopGlyph /></SideItem>
              <SideItem><PackageGlyph /></SideItem>
              <SideItem><BookGlyph /></SideItem>
              <SideItem><ScissorsMark size={18} strokeWidth={2.4} /></SideItem>
              <SideItem><FaUserFriends size={20} /></SideItem>
              <SideCollapse><ChevronsRight size={24} strokeWidth={2} /></SideCollapse>
            </Sidebar>

            <Main>
              <Crumbs>
                CSE1105<CrumbArrow><ChevronRight size={12} /></CrumbArrow>
                <CrumbDots><CrumbDot /><CrumbDot /><CrumbDot /></CrumbDots>
                <CrumbArrow><ChevronRight size={12} /></CrumbArrow>oopp-group-96
                <CrumbArrow><ChevronRight size={12} /></CrumbArrow>template
                <CrumbArrow><ChevronRight size={12} /></CrumbArrow><CrumbCurrent>Issue Boards</CrumbCurrent>
              </Crumbs>

              <FilterBar>
                <BoardSelect>Development <ChevronDown size={16} color="#b5b5b5" strokeWidth={3} /></BoardSelect>
                <FilterInput>Search or filter results...</FilterInput>
                <ActionButton $w={107} $ml={14}>Edit board</ActionButton>
                <ActionButton $w={112} $ml={13} $kind="outline">Add list <ChevronDown size={15} strokeWidth={3} /></ActionButton>
                <ActionButton $w={110} $ml={12} $kind="solid">Add issues</ActionButton>
                <ActionButton $w={46} $ml={13}>
                  <svg width="18" height="18" viewBox="0 0 18 18" fill="#2e2e2e"><path d="M0 0 H6 L4.3 1.7 L7 4.4 L4.4 7 L1.7 4.3 L0 6 Z M18 0 V6 L16.3 4.3 L13.6 7 L11 4.4 L13.7 1.7 L12 0 Z M0 18 V12 L1.7 13.7 L4.4 11 L7 13.6 L4.3 16.3 L6 18 Z M18 18 H12 L13.7 16.3 L11 13.6 L13.6 11 L16.3 13.7 L18 12 Z" /></svg>
                </ActionButton>
              </FilterBar>

              <BoardArea>
                <Lists>
                  {lists.map(l => (
                    <Column key={l.name} $color={l.color}>
                      <ColumnHeader>
                        <ColumnPill $color={l.color}>{l.name}</ColumnPill>
                        <Trash><TrashGlyph /></Trash>
                        <CountBox>
                          <BoardGlyph s={19} /> {l.count}<CountGap />
                          <WeightGlyph /> 0
                        </CountBox>
                        <AddCard><Plus size={17} strokeWidth={3.4} /></AddCard>
                      </ColumnHeader>
                      <ColumnBody>
                        <Cards>
                          {l.cards.map(c => <ListCard key={c.num} c={c} wide={!l.thumb} color={l.color} name={l.name} />)}
                        </Cards>
                        {l.thumb && (
                          <ListScroll>
                            <ArrowBox><Triangle $dir="up" /></ArrowBox>
                            <ListThumb $h={l.thumb} />
                            <ArrowEnd><Triangle $dir="down" /></ArrowEnd>
                          </ListScroll>
                        )}
                      </ColumnBody>
                    </Column>
                  ))}
                </Lists>
              </BoardArea>

              <HScroll>
                <HArrow $w={22}><Triangle $dir="left" /></HArrow>
                <HThumb />
                <HEnd $w={24}><Triangle $dir="right" /></HEnd>
              </HScroll>
            </Main>
          </Body>
        </Page>
        <PageScroll>
          <PageArrow><Triangle $dir="up" /></PageArrow>
          <PageThumb />
          <PageArrowEnd><Triangle $dir="down" /></PageArrowEnd>
        </PageScroll>
      </Viewport>

      <Taskbar>
        <StartSlot $w={60}><svg width="21" height="21" viewBox="0 0 21 21" fill="#fff"><path d="M0 3 L9 1.7 V10 H0 Z M10 1.5 L21 0 V10 H10 Z M0 11 H9 V19.3 L0 18 Z M10 11 H21 V21 L10 19.5 Z" /></svg></StartSlot>
        <StartSlot $w={59}><svg width="22" height="22" fill="none" stroke="#fff" strokeWidth="2.6"><circle cx="11" cy="11" r="8.5" /></svg></StartSlot>
        <StartSlot $w={61}><svg width="22" height="20" fill="none" stroke="#fff" strokeWidth="1.4"><path d="M1 2 V0 M13 2 V0 M1 1.5 H13 M1 5 H13 V14 H1 Z M1 17 H13 M1 17 V20 M13 17 V20 M18.5 0 V4 M18.5 7 V10 M18.5 13 V20" /></svg></StartSlot>
        <AppsGap />
        <AppSlot>
          <svg width="29" height="26" viewBox="0 0 29 26"><path d="M1 2 H10 L12 5 H28 V24 H1 Z" fill="#f6d98a" /><path d="M1 2 H10 L12 5 H1 Z" fill="#e8b84b" /><rect x="9" y="15" width="12" height="8" fill="#2fa8e0" /></svg>
        </AppSlot>
        <AppSlot $active>
          <svg width="28" height="28" viewBox="0 0 28 28"><path d="M14 14 L2.74 7.5 A13 13 0 0 1 25.26 7.5 Z" fill="#d93f36" /><path d="M14 14 L25.26 7.5 A13 13 0 0 1 14 27 Z" fill="#f4c20d" /><path d="M14 14 L14 27 A13 13 0 0 1 2.74 7.5 Z" fill="#2e9d4e" /><circle cx="14" cy="14" r="6.2" fill="#f2f2f2" /><circle cx="14" cy="14" r="4.8" fill="#4a86e8" /></svg>
        </AppSlot>
        <AppSlot>
          <svg width="26" height="28" viewBox="0 0 26 28"><circle cx="13" cy="14" r="13" fill="#0b5fe0" /><circle cx="13" cy="11" r="4.5" fill="#fff" /><path d="M11.5 13 H14.5 V20 L13 21 L11.5 20 Z" fill="#fff" /><circle cx="13" cy="11" r="1.5" fill="#0b5fe0" /></svg>
        </AppSlot>
        <AppSlot>
          <svg width="30" height="30" viewBox="0 0 30 30"><path d="M3 3 L14 1 L18 6 L4 26 L1 14 Z" fill="#ef3a6f" /><path d="M16 2 L29 7 L28 22 L18 29 L12 24 Z" fill="#1f7ad8" /><rect x="5" y="5" width="20" height="20" fill="#111" /><text x="8" y="16" fontSize="10" fontWeight="700" fontFamily="Liberation Mono" fill="#fff">IJ</text><rect x="8" y="20" width="8" height="1.8" fill="#fff" /></svg>
        </AppSlot>
        <AppSlot>
          <WhatsappMark><FaWhatsapp size={30} /></WhatsappMark>
          <AppBadge>1</AppBadge>
        </AppSlot>
        <AppSlot>
          <svg width="28" height="30" viewBox="0 0 28 30"><path d="M8 2 L24 5 L27 24 L13 27 L2 22 Z" fill="#9fd0dc" /><path d="M2 22 L13 27 L8 12 Z" fill="#3f8aa0" /><path d="M24 5 L27 24 L23 25 Z" fill="#c9a468" /></svg>
        </AppSlot>

        <Tray>
          <TraySlot $w={40}>
            <svg width="20" height="22" viewBox="0 0 20 22" fill="none" stroke="#fff" strokeWidth="1.4"><circle cx="13" cy="5" r="3.6" /><circle cx="6" cy="11" r="3.6" /><path d="M1 21 C1 15 11 15 11 21 M12 10 C15 9.5 19 11 19 15" /></svg>
          </TraySlot>
          <TraySlot $w={28} $ml={12}><ChevronUp size={20} strokeWidth={1.3} /></TraySlot>
          <TraySlot $w={28} $ml={2}>
            <svg width="20" height="18" viewBox="0 0 20 18"><rect x="0.5" y="1.5" width="18" height="10" fill="none" stroke="#fff" /><rect x="1" y="2" width="7" height="9" fill="#fff" /><circle cx="13.5" cy="12" r="5.5" fill="#0a7d2c" /><circle cx="13.5" cy="12" r="2" fill="#fff" /></svg>
          </TraySlot>
          <TraySlot $w={26} $ml={4}>
            <svg width="18" height="18" viewBox="0 0 18 18" fill="none" stroke="#ddd" strokeWidth="1.2"><path d="M1 17 A16 16 0 0 1 17 1 M4.5 17 A12.5 12.5 0 0 1 17 4.5 M8 17 A9 9 0 0 1 17 8" /><circle cx="14" cy="15" r="1.5" fill="#ddd" /></svg>
          </TraySlot>
          <Clock>9:37 PM<br />12-Mar-19</Clock>
          <Notify>
            <svg width="21" height="20" viewBox="0 0 21 20"><path d="M0 0 H21 V16 H8 L4 20 V16 H0 Z" fill="#fff" /><path d="M4 5 H17 M4 8 H17 M4 11 H17" stroke="#333" /></svg>
            <NotifyBadge>3</NotifyBadge>
          </Notify>
        </Tray>
      </Taskbar>
    </Screen>
  );
}
